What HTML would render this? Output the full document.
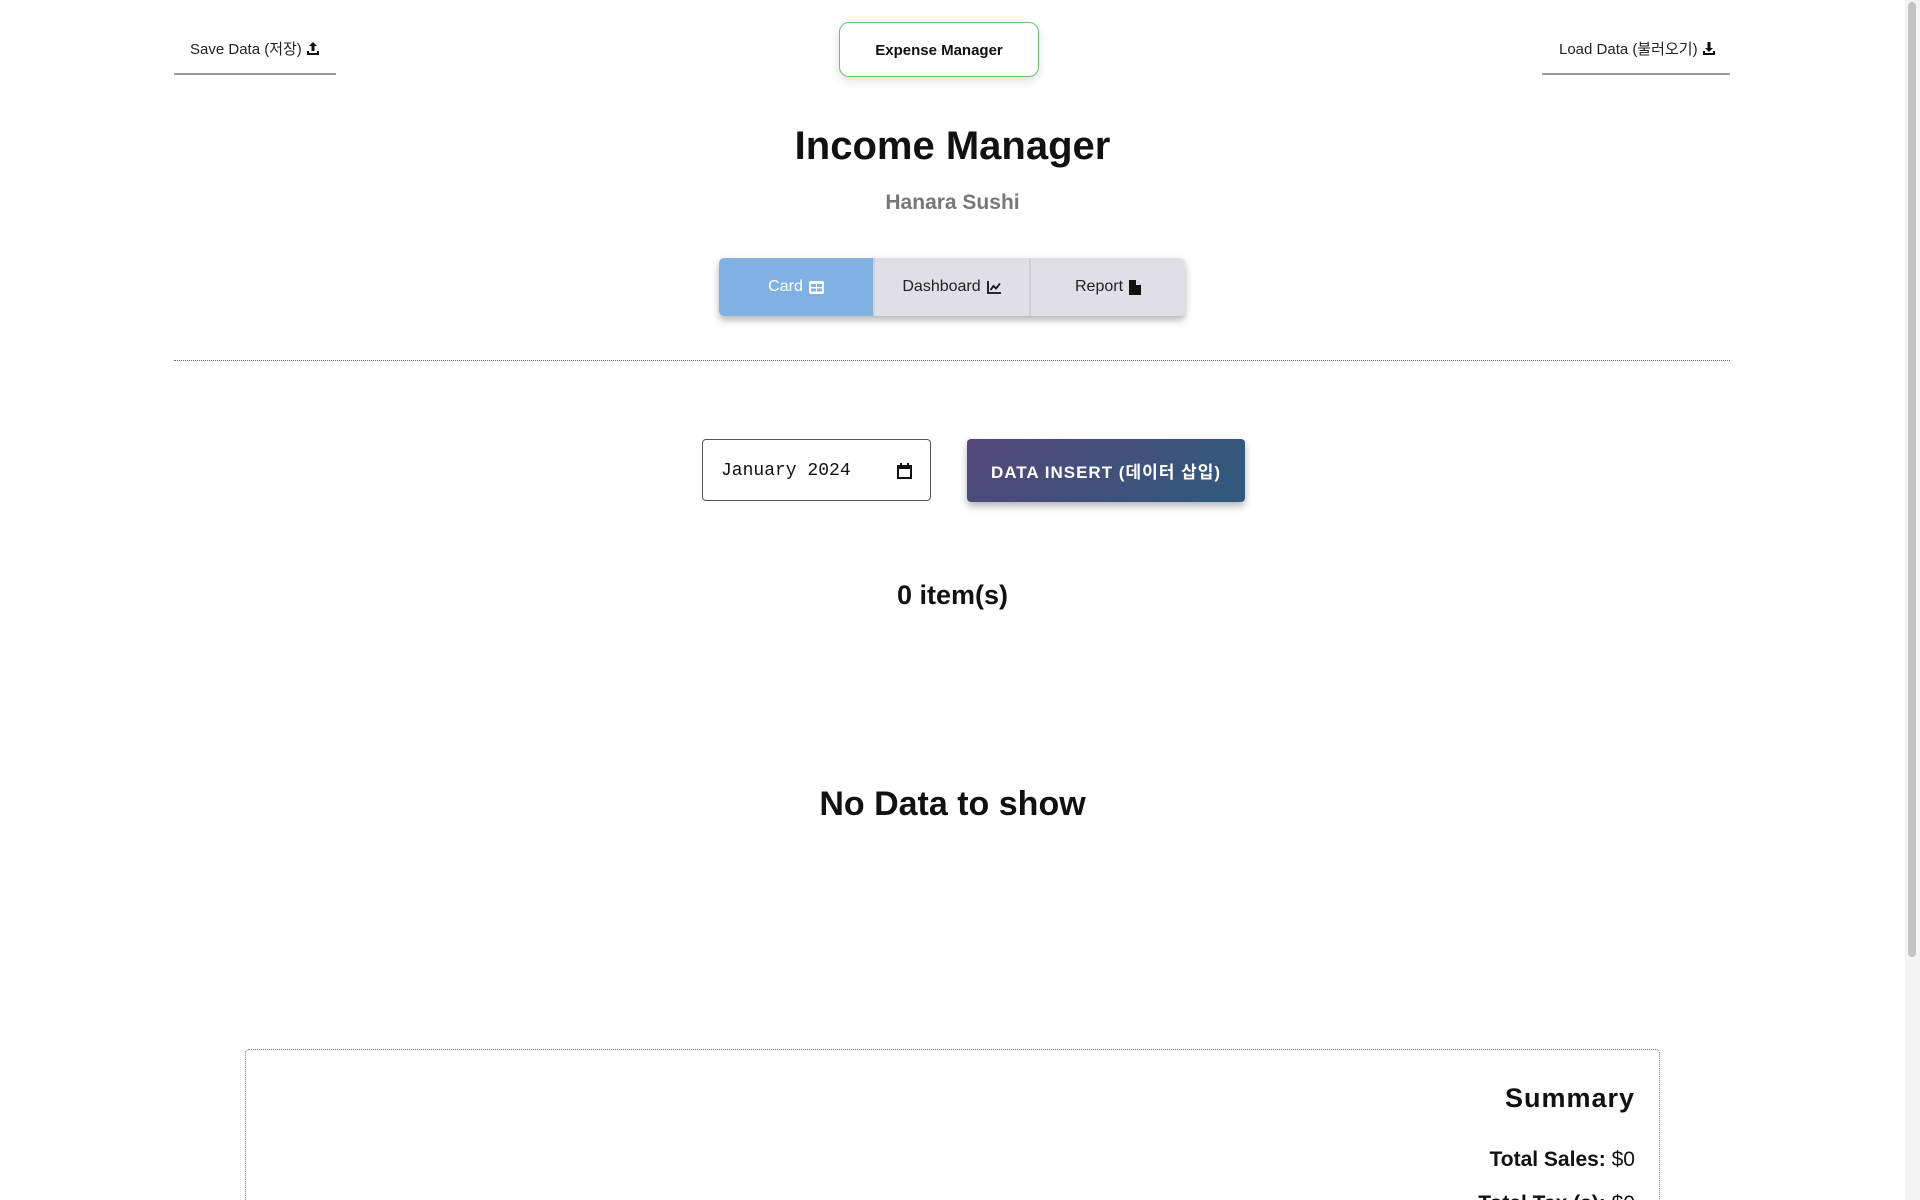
<!DOCTYPE html>
<html><head><meta charset="utf-8"><style>
html,body{margin:0;padding:0;overflow:hidden;width:1920px;height:1200px;}
body{background:#fff;font-family:"Liberation Sans","Noto Sans CJK KR",sans-serif;color:#111;position:relative;}
.abs{position:absolute;}
.top{font-size:15px;color:#222;top:38px;}
.ul{height:2px;background:#9a9a9a;top:73px;}
.exp{left:839px;top:22px;width:198px;height:51px;border:1.5px solid #6fbf73;border-radius:10px;box-shadow:0 4px 10px rgba(0,0,0,.12);display:flex;align-items:center;justify-content:center;font-weight:bold;font-size:15px;background:#fff;padding-top:2px;box-sizing:content-box;}
.c{left:0;width:1905px;text-align:center;}
.tabs{left:719px;top:258px;width:466px;height:58px;display:flex;border-radius:5px;overflow:hidden;box-shadow:0 4px 8px rgba(0,0,0,.3);}
.tab{flex:1;display:flex;align-items:center;justify-content:center;font-size:16px;background:#e0dfe6;color:#222;gap:6px;}
.tab+.tab{border-left:2px solid #cfcfd6;}
.date{left:702px;top:439px;width:229px;height:62px;border:1.5px solid #555;border-radius:4px;font-family:"Liberation Mono",monospace;font-size:18px;display:flex;align-items:center;padding-left:18px;padding-top:2px;box-sizing:border-box;}
.btn{left:967px;top:439px;width:278px;height:63px;border-radius:4px;background:linear-gradient(135deg,#54467a,#2f5a7c);color:#fff;font-weight:bold;font-size:17px;letter-spacing:1px;display:flex;align-items:center;justify-content:center;box-shadow:0 4px 8px rgba(0,0,0,.3);}
</style></head><body>
<div class="abs top" style="left:190px">Save Data (저장) <svg width="14" height="15" viewBox="0 0 14 15" style="vertical-align:-2px"><path d="M7 1L3 5h2.5v5h3V5H11z" fill="#111"/><path d="M1 10v4h12v-4h-2v2H3v-2z" fill="#111"/></svg></div>
<div class="abs ul" style="left:174px;width:162px"></div>
<div class="abs exp">Expense Manager</div>
<div class="abs top" style="left:1559px">Load Data (불러오기) <svg width="14" height="15" viewBox="0 0 14 15" style="vertical-align:-2px"><path d="M7 11L3 7h2.5V1h3v6H11z" fill="#111"/><path d="M1 10v4h12v-4h-2v2H3v-2z" fill="#111"/></svg></div>
<div class="abs ul" style="left:1542px;width:188px"></div>
<div class="abs c" style="top:124px;font-size:40px;font-weight:bold;">Income Manager</div>
<div class="abs c" style="top:191px;font-size:21px;font-weight:bold;color:#777;">Hanara Sushi</div>
<div class="abs tabs">
<div class="tab" style="background:#7fb1e3;color:#fff;">Card <svg width="15" height="13" viewBox="0 0 15 13"><rect x="0" y="0" width="15" height="13" rx="2" fill="#fff"/><rect x="2" y="3" width="5" height="3" fill="#7fb1e3"/><rect x="8" y="3" width="5" height="3" fill="#7fb1e3"/><rect x="2" y="7.5" width="5" height="3" fill="#7fb1e3"/><rect x="8" y="7.5" width="5" height="3" fill="#7fb1e3"/></svg></div>
<div class="tab">Dashboard <svg width="15" height="14" viewBox="0 0 15 14"><path d="M1 1v12h13" stroke="#111" stroke-width="1.8" fill="none"/><path d="M3.5 10l3-4 2.5 2.5 4-5" stroke="#111" stroke-width="1.8" fill="none"/></svg></div>
<div class="tab">Report <svg width="12" height="15" viewBox="0 0 12 15"><path d="M0 0h7l5 5v10H0z" fill="#111"/><path d="M7 0v5h5" fill="#e0dfe6"/></svg></div>
</div>
<div class="abs" style="left:174px;top:360px;width:1556px;border-top:1px dotted #666;"></div>
<div class="abs date">January 2024<svg style="position:absolute;right:18px" width="15" height="16" viewBox="0 0 15 16"><rect x="1" y="3" width="13" height="12" fill="none" stroke="#111" stroke-width="2"/><rect x="1" y="3" width="13" height="3" fill="#111"/><path d="M4 0v4M11 0v4" stroke="#111" stroke-width="2"/></svg></div>
<div class="abs btn">DATA INSERT (데이터 삽입)</div>
<div class="abs c" style="top:580px;font-size:27px;font-weight:bold;">0 item(s)</div>
<div class="abs c" style="top:785px;font-size:34px;font-weight:bold;">No Data to show</div>
<div class="abs" style="left:245px;top:1049px;width:1413px;height:200px;border:1px dotted #777;border-radius:4px;"></div>
<div class="abs" style="right:285px;top:1083px;font-size:27px;font-weight:bold;letter-spacing:1px;">Summary</div>
<div class="abs" style="right:285px;top:1148px;font-size:21px;"><b>Total Sales:</b> $0</div>
<div class="abs" style="right:285px;top:1192px;font-size:21px;"><b>Total Tax (s):</b> $0</div>
<div class="abs" style="left:1905px;top:0;width:15px;height:1200px;background:#f4f4f4;"></div>
<div class="abs" style="left:1908px;top:2px;width:8px;height:955px;background:#c4c4c4;border-radius:4px;"></div>
</body></html>
